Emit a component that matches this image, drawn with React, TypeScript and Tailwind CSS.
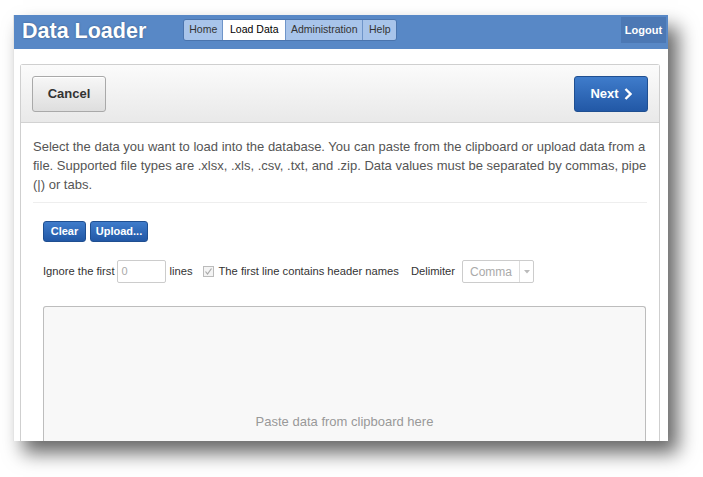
import React from "react";

export default function App() {
  const font = { fontFamily: '"Liberation Sans", Arial, sans-serif' };
  return (
    <div className="w-[703px] h-[477px] bg-white overflow-hidden pl-[13px] pt-[15px]" style={font}>
      <div className="w-[655px] h-[426px] bg-white overflow-hidden flex flex-col shadow-[10px_12px_18px_rgba(0,0,0,0.6)] border-l border-[#e4e4e4]">
        {/* Header */}
        <div className="h-[34px] shrink-0 bg-[#5888c6] flex items-start">
          <div className="pl-[8px] pt-[2px] text-white font-bold text-[21.5px] leading-[28px] [text-shadow:0_0_2px_rgba(0,0,0,0.35)]">
            Data Loader
          </div>
          <div className="ml-[37px] mt-[4px] flex h-[22px] border border-[#4a74ad] rounded-[3px] overflow-hidden text-[10.5px] text-[#333]">
            <div className="w-[39px] flex items-center justify-center bg-[#a8c4ea] border-r border-[#6f95c9]">Home</div>
            <div className="w-[63px] flex items-center justify-center bg-white text-black border-r border-[#6f95c9]">Load Data</div>
            <div className="w-[77px] flex items-center justify-center bg-[#a8c4ea] border-r border-[#6f95c9]">Administration</div>
            <div className="w-[33px] flex items-center justify-center bg-[#a8c4ea]">Help</div>
          </div>
          <div className="ml-auto mr-[2px] mt-[2px] h-[26px] w-[45px] bg-[#4c78b4] flex items-center justify-center text-white font-bold text-[11px]">
            Logout
          </div>
        </div>

        {/* Panel */}
        <div className="ml-[6px] mr-[8px] mt-[15px] flex-1 border border-[#cfcfcf] border-b-0 rounded-t-[3px] flex flex-col">
          <div className="h-[58px] shrink-0 bg-gradient-to-b from-[#fbfbfb] to-[#e9e9e9] border-b border-[#d2d2d2] flex items-center justify-between px-[11px]">
            <button className="w-[74px] h-[36px] rounded-[3px] border border-[#a9a9a9] bg-gradient-to-b from-[#f7f7f7] to-[#dedede] text-[13px] font-bold text-[#333] shadow-[inset_0_1px_0_#fff]">
              Cancel
            </button>
            <button className="w-[74px] h-[36px] rounded-[3px] border border-[#1f4f91] bg-gradient-to-b from-[#3f7ccb] to-[#2258a6] text-[13px] font-bold text-white flex items-center justify-center gap-[5px]">
              Next
              <svg width="8" height="12" viewBox="0 0 8 12">
                <path d="M1.5 1 L6.5 6 L1.5 11" fill="none" stroke="white" strokeWidth="2.4" />
              </svg>
            </button>
          </div>
          <div className="flex-1 bg-white px-[12px] flex flex-col">
            <p className="pt-[14px] text-[13px] leading-[19px] text-[#555] pb-[8px] border-b border-[#eeeeee]">
              Select the data you want to load into the database. You can paste from the clipboard or upload data from a file. Supported file types are .xlsx, .xls, .csv, .txt, and .zip. Data values must be separated by commas, pipe (|) or tabs.
            </p>
            <div className="pl-[10px] pr-[1px] flex flex-col flex-1">
              <div className="mt-[18px] flex gap-[4px]">
                <button className="h-[21px] w-[43px] rounded-[3px] border border-[#1f4f91] bg-gradient-to-b from-[#3f7ccb] to-[#2258a6] text-white text-[11px] font-bold">
                  Clear
                </button>
                <button className="h-[21px] w-[58px] rounded-[3px] border border-[#1f4f91] bg-gradient-to-b from-[#3f7ccb] to-[#2258a6] text-white text-[11px] font-bold">
                  Upload...
                </button>
              </div>
              <div className="mt-[18px] flex items-center text-[11.2px] text-[#333] h-[23px]">
                <span>Ignore the first</span>
                <div className="ml-[2px] w-[49px] h-[23px] border border-[#cccccc] rounded-[2px] flex items-center pl-[4px] text-[11px] text-[#aaa]">0</div>
                <span className="ml-[4px]">lines</span>
                <span className="ml-[10px] w-[11px] h-[11px] border border-[#bbb] bg-[#f4f4f4] flex items-center justify-center">
                  <svg width="9" height="9" viewBox="0 0 9 9">
                    <path d="M1.5 4.5 L3.5 7 L7.5 1.5" fill="none" stroke="#aaa" strokeWidth="1.2" />
                  </svg>
                </span>
                <span className="ml-[5px]">The first line contains header names</span>
                <span className="ml-[12px]">Delimiter</span>
                <div className="ml-[7px] w-[72px] h-[23px] border border-[#cccccc] rounded-[2px] flex items-center text-[12px] text-[#aaa]">
                  <span className="flex-1 pl-[7px]">Comma</span>
                  <span className="w-[14px] h-full border-l border-[#dddddd] flex items-center justify-center">
                    <svg width="6" height="4" viewBox="0 0 6 4"><path d="M0 0 L6 0 L3 3.5 Z" fill="#bbb" /></svg>
                  </span>
                </div>
              </div>
              <div className="mt-[23px] flex-1 bg-[#f8f8f8] border border-[#bdbdbd] border-b-0 rounded-t-[3px] flex flex-col items-center">
                <span className="mt-[105px] text-[13px] text-[#999]">Paste data from clipboard here</span>
              </div>
            </div>
          </div>
        </div>
      </div>
    </div>
  );
}
